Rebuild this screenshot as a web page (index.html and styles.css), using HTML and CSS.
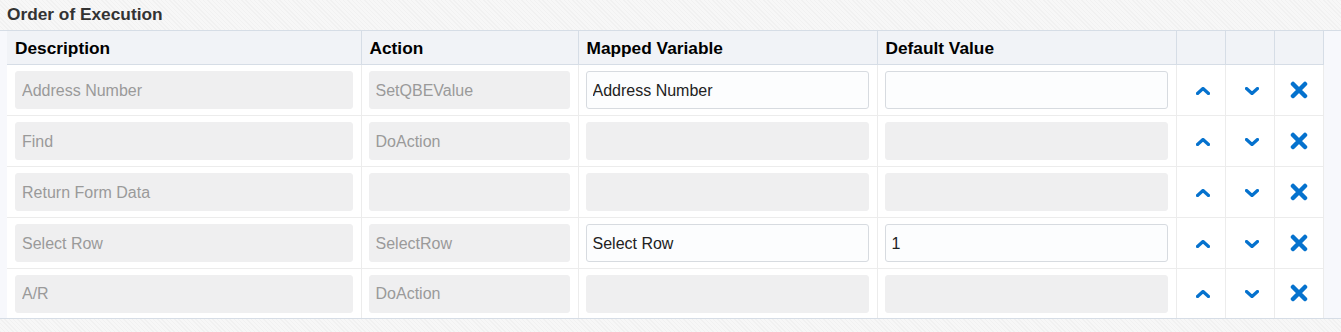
FILE: index.html
```html
<!DOCTYPE html>
<html lang="en">
<head>
  <meta charset="UTF-8" />
  <title>Order of Execution</title>
  <link rel="stylesheet" href="styles.css">
</head>
<body>
  <h2 class="section-title">Order of Execution</h2>

  <div class="panel">
    <table class="steps">
      <thead>
        <tr>
          <th class="col-desc">Description</th>
          <th class="col-action">Action</th>
          <th class="col-var">Mapped Variable</th>
          <th class="col-default">Default Value</th>
          <th class="col-icon"></th>
          <th class="col-icon"></th>
          <th class="col-icon"></th>
        </tr>
      </thead>
      <tbody>
        <tr>
          <td><input class="field" type="text" placeholder="Address Number" disabled></td>
          <td><input class="field" type="text" placeholder="SetQBEValue" disabled></td>
          <td><input class="field edit" type="text" value="Address Number"></td>
          <td><input class="field edit" type="text" value=""></td>
          <td class="icon-cell"><svg class="chev" viewBox="0 0 14 8"><path d="M1.5 6.5 7 1.5l5.5 5"/></svg></td>
          <td class="icon-cell"><svg class="chev" viewBox="0 0 14 8"><path d="M1.5 1.5 7 6.5l5.5-5"/></svg></td>
          <td class="icon-cell"><svg class="del" viewBox="0 0 18 18"><path d="M3 3l12 12M15 3 3 15"/></svg></td>
        </tr>
        <tr>
          <td><input class="field" type="text" placeholder="Find" disabled></td>
          <td><input class="field" type="text" placeholder="DoAction" disabled></td>
          <td><input class="field" type="text" disabled></td>
          <td><input class="field" type="text" disabled></td>
          <td class="icon-cell"><svg class="chev" viewBox="0 0 14 8"><path d="M1.5 6.5 7 1.5l5.5 5"/></svg></td>
          <td class="icon-cell"><svg class="chev" viewBox="0 0 14 8"><path d="M1.5 1.5 7 6.5l5.5-5"/></svg></td>
          <td class="icon-cell"><svg class="del" viewBox="0 0 18 18"><path d="M3 3l12 12M15 3 3 15"/></svg></td>
        </tr>
        <tr>
          <td><input class="field" type="text" placeholder="Return Form Data" disabled></td>
          <td><input class="field" type="text" disabled></td>
          <td><input class="field" type="text" disabled></td>
          <td><input class="field" type="text" disabled></td>
          <td class="icon-cell"><svg class="chev" viewBox="0 0 14 8"><path d="M1.5 6.5 7 1.5l5.5 5"/></svg></td>
          <td class="icon-cell"><svg class="chev" viewBox="0 0 14 8"><path d="M1.5 1.5 7 6.5l5.5-5"/></svg></td>
          <td class="icon-cell"><svg class="del" viewBox="0 0 18 18"><path d="M3 3l12 12M15 3 3 15"/></svg></td>
        </tr>
        <tr>
          <td><input class="field" type="text" placeholder="Select Row" disabled></td>
          <td><input class="field" type="text" placeholder="SelectRow" disabled></td>
          <td><input class="field edit" type="text" value="Select Row"></td>
          <td><input class="field edit" type="text" value="1"></td>
          <td class="icon-cell"><svg class="chev" viewBox="0 0 14 8"><path d="M1.5 6.5 7 1.5l5.5 5"/></svg></td>
          <td class="icon-cell"><svg class="chev" viewBox="0 0 14 8"><path d="M1.5 1.5 7 6.5l5.5-5"/></svg></td>
          <td class="icon-cell"><svg class="del" viewBox="0 0 18 18"><path d="M3 3l12 12M15 3 3 15"/></svg></td>
        </tr>
        <tr>
          <td><input class="field" type="text" placeholder="A/R" disabled></td>
          <td><input class="field" type="text" placeholder="DoAction" disabled></td>
          <td><input class="field" type="text" disabled></td>
          <td><input class="field" type="text" disabled></td>
          <td class="icon-cell"><svg class="chev" viewBox="0 0 14 8"><path d="M1.5 6.5 7 1.5l5.5 5"/></svg></td>
          <td class="icon-cell"><svg class="chev" viewBox="0 0 14 8"><path d="M1.5 1.5 7 6.5l5.5-5"/></svg></td>
          <td class="icon-cell"><svg class="del" viewBox="0 0 18 18"><path d="M3 3l12 12M15 3 3 15"/></svg></td>
        </tr>
      </tbody>
    </table>
  </div>
</body>
</html>
```

FILE: styles.css
```css
* {
  box-sizing: border-box;
  margin: 0;
  padding: 0;
  font-family: 'Liberation Sans', Arial, sans-serif;
}

body {
  background-color: #f5f5f5;
  background-image: repeating-linear-gradient(45deg, #f1f1f1 0, #f1f1f1 1px, #f7f7f7 1px, #f7f7f7 3px);
  color: #333;
  height: 332px;
  overflow: hidden;
}

.section-title {
  font-size: 17.3px;
  font-weight: bold;
  color: #333;
  height: 30px;
  line-height: 29px;
  padding-left: 7px;
}

.panel {
  background: #f7f8fc;
  border-top: 1px solid #d6dde6;
  border-bottom: 1px solid #d6dde6;
  padding-left: 7px;
  height: 289px;
}

.steps {
  border-collapse: collapse;
  width: 1316px;
  table-layout: fixed;
}

.steps th {
  background: #f1f3f7;
  border: 1px solid #d6dde6;
  border-top: none;
  height: 33px;
  text-align: left;
  padding: 2px 8px 0;
  font-size: 17.3px;
  font-weight: bold;
  color: #000;
}

.steps th:first-child {
  border-left: none;
}

.col-desc { width: 354px; }
.col-action { width: 217px; }
.col-var { width: 299px; }
.col-default { width: 299px; }
.col-icon { width: 49px; }

.steps td {
  background: #fff;
  border: 1px solid #ececec;
  height: 51px;
  padding: 1px 8px 0 7px;
}

.steps tr td:first-child {
  border-left: none;
  padding-left: 8px;
}

.steps tbody tr:last-child td {
  border-bottom: none;
  height: 50px;
}

.field {
  display: block;
  width: 100%;
  height: 38px;
  border: 1px solid #efeff0;
  border-radius: 3px;
  background: #efeff0;
  padding: 1px 6px 0;
  font-size: 16px;
  color: #333;
  outline: none;
}

.field::placeholder {
  color: #9a9a9a;
}

.field.edit {
  background: #fcfdfe;
  border-color: #d7dbe0;
  color: #222;
}

.steps td.icon-cell {
  padding: 0;
  text-align: center;
}

.chev {
  width: 14px;
  height: 8px;
  fill: none;
  stroke: #0572ce;
  stroke-width: 3.2;
  stroke-linecap: round;
  stroke-linejoin: round;
  margin-left: 5px;
}

.del {
  width: 18px;
  height: 18px;
  fill: none;
  stroke: #0572ce;
  stroke-width: 4.5;
  stroke-linecap: round;
  margin-top: 4px;
  margin-left: 1px;
}
```
